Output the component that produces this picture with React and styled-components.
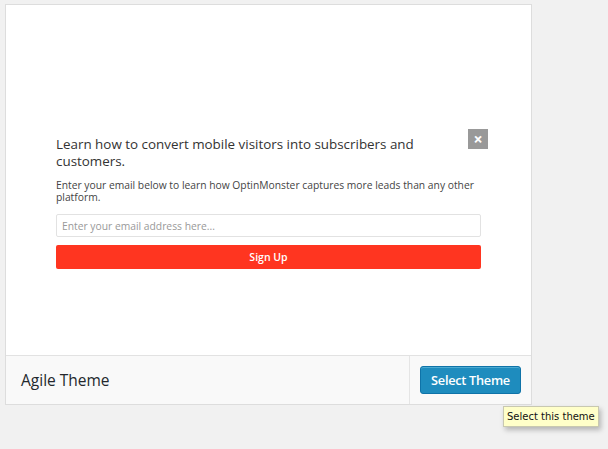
import React from 'react';
import styled, { createGlobalStyle } from 'styled-components';

const GlobalStyle = createGlobalStyle`
  html, body {
    margin: 0;
    padding: 0;
    background: #f1f1f1;
    font-family: "Open Sans", "Noto Sans", sans-serif;
  }
`;

const Page = styled.div`
  position: relative;
  width: 608px;
  height: 449px;
  padding: 4px 0 0 5px;
  box-sizing: border-box;
`;

const Card = styled.div`
  width: 527px;
  border: 1px solid #dddddd;
  box-sizing: border-box;
  background: #fff;
  display: flex;
  flex-direction: column;
`;

const Preview = styled.div`
  height: 350px;
  background: #fff;
  display: flex;
  flex-direction: column;
  padding: 124px 0 0 50px;
  box-sizing: border-box;
`;

const Optin = styled.div`
  position: relative;
  width: 425px;
`;

const Heading = styled.h2`
  margin: 0;
  padding-top: 7px;
  width: 400px;
  font-size: 13.4px;
  font-weight: 400;
  line-height: 17px;
  color: #333;
`;

const Close = styled.button`
  position: absolute;
  top: 0;
  right: -7px;
  width: 20px;
  height: 20px;
  border: none;
  padding: 0;
  background: #999;
  color: #fff;
  font-size: 16px;
  font-weight: 700;
  font-family: inherit;
  line-height: 20px;
`;

const Text = styled.p`
  margin: 9px 0 0;
  font-size: 10.3px;
  line-height: 12px;
  color: #444;
`;

const EmailInput = styled.input`
  display: block;
  margin-top: 11px;
  width: 425px;
  height: 23px;
  box-sizing: border-box;
  border: 1px solid #e2e2e2;
  border-radius: 2px;
  padding: 0 5px;
  font-family: inherit;
  font-size: 10.3px;
  color: #555;
  &::placeholder { color: #999; }
`;

const SignUp = styled.button`
  display: block;
  margin-top: 8px;
  width: 425px;
  height: 24px;
  border: none;
  border-radius: 2px;
  background: #ff3520;
  color: #fff;
  font-family: inherit;
  font-size: 10.5px;
  font-weight: 600;
`;

const Footer = styled.div`
  height: 48px;
  border-top: 1px solid #e2e2e2;
  background: #f9f9f9;
  display: flex;
  align-items: stretch;
`;

const Name = styled.h3`
  flex: 1;
  margin: 0;
  padding-left: 15px;
  display: flex;
  align-items: center;
  font-size: 15.5px;
  font-weight: 400;
  color: #23282d;
`;

const Actions = styled.div`
  border-left: 1px solid #e5e5e5;
  padding: 0 10px;
  display: flex;
  align-items: center;
`;

const SelectButton = styled.button`
  width: 101px;
  height: 28px;
  border: 1px solid #0f73a8;
  border-radius: 3px;
  background: #1e8cbe;
  box-shadow: inset 0 1px 0 rgba(120, 200, 230, 0.5);
  color: #fff;
  font-family: inherit;
  font-size: 12.8px;
  font-weight: 600;
  letter-spacing: -0.3px;
  padding: 0;
`;

const Tooltip = styled.div`
  position: absolute;
  left: 503px;
  top: 406px;
  height: 19px;
  padding: 0 3px;
  border: 1px solid #c8c8b0;
  background: #ffffc9;
  box-shadow: 2px 3px 5px rgba(0, 0, 0, 0.25);
  font-family: "DejaVu Sans", Verdana, sans-serif;
  font-size: 10px;
  line-height: 19px;
  color: #111;
  white-space: nowrap;
`;

export default function App() {
  return (
    <>
      <GlobalStyle />
      <Page>
        <Card>
          <Preview>
            <Optin>
              <Heading>Learn how to convert mobile visitors into subscribers and customers.</Heading>
              <Close>×</Close>
              <Text>Enter your email below to learn how OptinMonster captures more leads than any other platform.</Text>
              <EmailInput placeholder="Enter your email address here..." />
              <SignUp>Sign Up</SignUp>
            </Optin>
          </Preview>
          <Footer>
            <Name>Agile Theme</Name>
            <Actions>
              <SelectButton>Select Theme</SelectButton>
            </Actions>
          </Footer>
        </Card>
        <Tooltip>Select this theme</Tooltip>
      </Page>
    </>
  );
}
